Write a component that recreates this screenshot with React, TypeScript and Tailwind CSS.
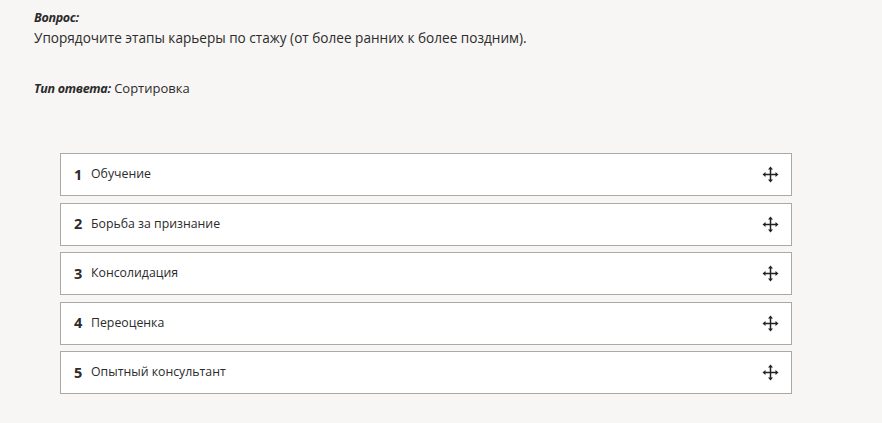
import React from "react";

const items = [
  "Обучение",
  "Борьба за признание",
  "Консолидация",
  "Переоценка",
  "Опытный консультант",
];

function MoveIcon() {
  return (
    <svg width="17" height="17" viewBox="0 0 17 17" fill="#222">
      <rect x="7.75" y="2.5" width="1.5" height="12" />
      <rect x="2.5" y="7.75" width="12" height="1.5" />
      <polygon points="8.5,0.5 11,3.5 6,3.5" />
      <polygon points="8.5,16.5 11,13.5 6,13.5" />
      <polygon points="0.5,8.5 3.5,6 3.5,11" />
      <polygon points="16.5,8.5 13.5,6 13.5,11" />
    </svg>
  );
}

export default function App() {
  return (
    <div
      className="w-[882px] h-[423px] bg-[#f7f6f4] text-[#2b2b2b] pl-[34px] pt-[8px]"
      style={{ fontFamily: '"Open Sans", "Noto Sans", sans-serif' }}
    >
      <div className="text-[12.5px] leading-[19px] font-bold italic tracking-[-0.3px]">Вопрос:</div>
      <div className="text-[13.6px] leading-[21px]">
        Упорядочите этапы карьеры по стажу (от более ранних к более поздним).
      </div>
      <div className="mt-[30px] text-[13px] leading-[20px]">
        <span className="font-bold italic tracking-[-0.3px] text-[12.5px]">Тип ответа:</span> Сортировка
      </div>
      <div className="mt-[54px] ml-[26px] w-[732px] flex flex-col gap-[6.5px]">
        {items.map((label, i) => (
          <div
            key={label}
            className="h-[43px] bg-white border border-[#a9a9a9] flex items-center pl-[13px] pr-[12px]"
          >
            <span className="font-bold text-[14.5px] w-[17px]">{i + 1}</span>
            <span className="text-[12.3px] flex-1">{label}</span>
            <MoveIcon />
          </div>
        ))}
      </div>
    </div>
  );
}
